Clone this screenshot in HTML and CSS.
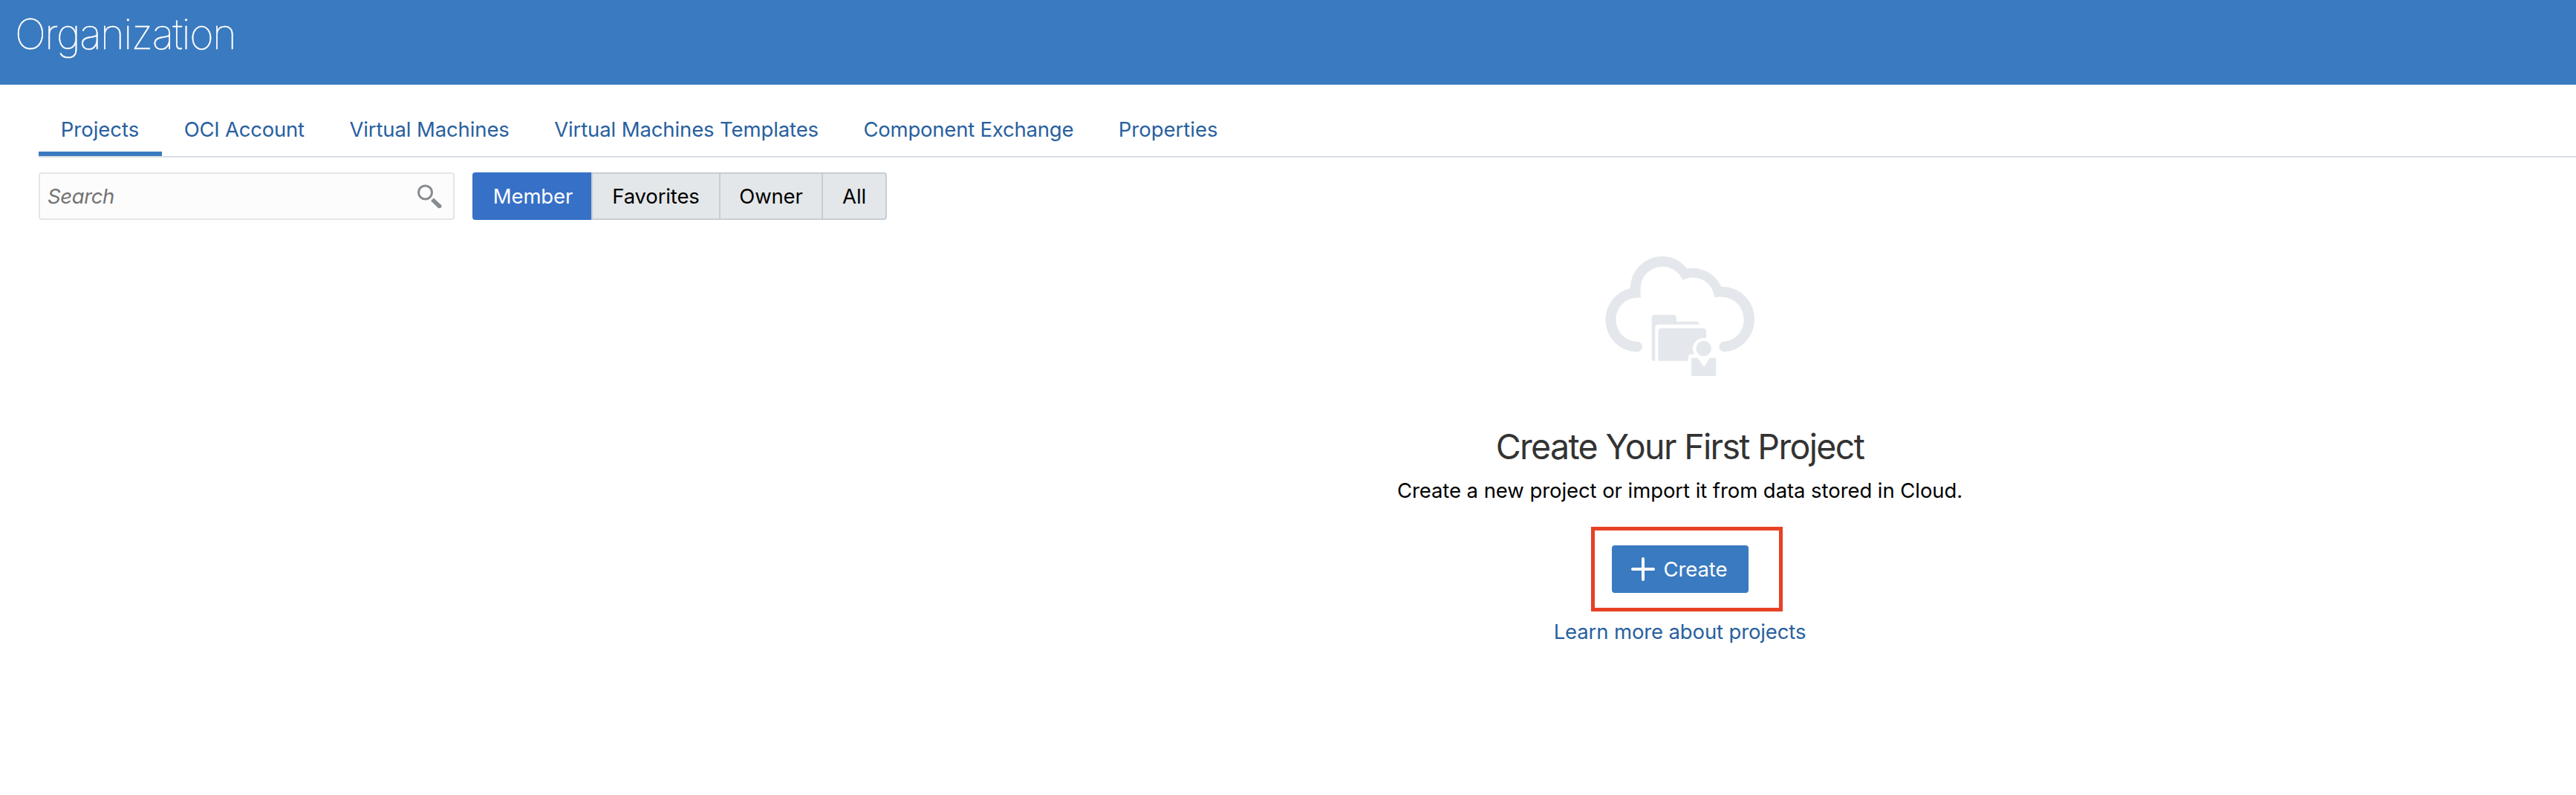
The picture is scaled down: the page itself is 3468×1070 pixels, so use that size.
FILE: index.html
```
<!DOCTYPE html>
<html lang="en">
<head>
<meta charset="utf-8">
<title>Organization</title>
<link rel="stylesheet" href="styles.css">
</head>
<body>
<header class="header"><h1 class="header-title">Organization</h1></header>
<nav class="tabs">
  <a class="tab tab-active tab-wide">Projects</a>
  <a class="tab tab-tight">OCI Account</a>
  <a class="tab">Virtual Machines</a>
  <a class="tab">Virtual Machines Templates</a>
  <a class="tab tab-tight">Component Exchange</a>
  <a class="tab tab-wide">Properties</a>
</nav>
<div class="toolbar">
  <div class="search">
    <span class="search-placeholder">Search</span>
    <svg class="search-icon" width="36" height="36" viewBox="0 0 36 36" fill="none" stroke="#878c90">
      <circle cx="12.5" cy="13" r="9" stroke-width="3"/>
      <path d="M22 22.5 32 32" stroke-width="5.5"/>
      <path d="M31.5 31.5h.2" stroke-width="5.5" stroke-linecap="round"/>
    </svg>
  </div>
  <div class="filters">
    <button class="filter filter-member">Member</button>
    <button class="filter filter-favorites">Favorites</button>
    <button class="filter filter-owner">Owner</button>
    <button class="filter filter-all">All</button>
  </div>
</div>
<main class="empty">
  <svg class="empty-art" width="260" height="210" viewBox="0 0 780 630" fill="#e4e8ec">
    <path d="M222 461A128 130 0 0 1 94 331A129 131 0 0 1 194 204A129 130 0 0 1 323 75A129 129 0 0 1 423 124A129 129 0 0 1 562 197A131 132 0 0 1 696 329A128 132 0 0 1 574 461A21 21 0 0 1 574 419A85 89 0 0 0 653 330A90 91 0 0 0 565 239Q550 238 534 241A87 87 0 0 0 406 171A89 89 0 0 0 323 117A87 88 0 0 0 236 205Q234 225 238 241L222 242A87 89 0 0 0 136 331A87 89 0 0 0 222 419A21 21 0 0 1 222 461Z"/>
    <path d="M281 491V323Q281 311 293 311H367Q381 311 381 325V338H460Q472 338 474 350H309Q295 350 295 364V497H287Q281 497 281 491Z"/>
    <path d="M307 497V378Q307 365 320 365H488Q501 365 501 378V405H490A43 43 0 0 0 453 470H440Q428 472 428 485V497Z"/>
    <circle cx="491" cy="447" r="31"/>
    <path d="M445 485H467L492 521L515 485H537Q541 485 541 489V554Q541 558 537 558H445Q441 558 441 554V489Q441 485 445 485Z"/>
  </svg>
  <h2 class="empty-title">Create Your First Project</h2>
  <p class="empty-text">Create a new project or import it from data stored in Cloud.</p>
  <div class="create-wrap">
    <button class="create">
      <svg width="32" height="32" viewBox="0 0 32 32" stroke="#fff" stroke-width="4" stroke-linecap="round"><path d="M16 2v28M2 16h28"/></svg>
      <span>Create</span>
    </button>
    <span class="highlight"></span>
  </div>
  <a class="learn">Learn more about projects</a>
</main>
</body>
</html>
```
FILE: styles.css
```
* { box-sizing: border-box; }
body { margin: 0; background: #fff; color: #000; font: 420 27.5px/40px Inter, "Liberation Sans", sans-serif; height: 1070px; overflow: hidden; }
h1, h2, p { margin: 0; }
button { font: inherit; border: 0; margin: 0; }
.header { height: 114px; background: #3a7ac0; padding: 10px 20px; }
.header-title { color: #fff; font-size: 56px; line-height: 72px; font-weight: 100; letter-spacing: -1.5px; -webkit-text-stroke: 0.6px #fff; }
.tabs { display: flex; margin-left: 52px; height: 98px; padding-top: 32px; border-bottom: 2px solid #d9dfe4; }
.tab { height: 64px; padding: 8px 30.8px 0 29.7px; color: #28609f; letter-spacing: -0.12px; white-space: nowrap; }
.tab-wide { letter-spacing: 0; }
.tab-tight { letter-spacing: -0.22px; }
.tab-active { width: 166px; border-bottom: 6px solid #3a7ac0; }
.toolbar { display: flex; gap: 24px; margin: 20px 0 0 52px; height: 64px; }
.search { display: flex; align-items: center; justify-content: space-between; width: 560px; padding: 0 14px 0 10px; border: 2px solid #e5e6e7; border-radius: 4px; background: #fcfcfc; }
.search-placeholder { color: #737373; font-style: italic; letter-spacing: -0.4px; }
.filters { display: flex; }
.filter { padding: 0; height: 64px; text-align: center; background: #e4e7e9; color: #000; border: 2px solid #c6cdd4; border-left-width: 0; letter-spacing: -0.15px; }
.filter-member { width: 160px; padding-left: 3px; background: #3770c7; color: #fff; border: 0; border-radius: 4px 0 0 4px; }
.filter-favorites { width: 174px; border-left-width: 2px; }
.filter-owner { width: 138px; }
.filter-all { width: 86px; border-radius: 0 4px 4px 0; }
.empty { display: flex; flex-direction: column; align-items: center; margin-left: 1055px; padding-top: 24px; }
.empty-art { margin-right: 3px; }
.empty-title { margin-top: 41px; font-size: 46.5px; line-height: 60px; font-weight: 420; letter-spacing: -1.65px; color: #333; }
.empty-text { margin-top: 9px; letter-spacing: -0.07px; }
.create-wrap { position: relative; margin-top: 54px; height: 64px; }
.create { display: flex; align-items: center; gap: 12px; width: 184px; height: 64px; padding: 0 0 0 26px; background: #3a7ac0; color: #fff; border-radius: 4px; letter-spacing: -0.1px; }
.highlight { position: absolute; left: -28px; top: -25px; width: 258px; height: 114px; border: 5px solid #e84126; }
.learn { margin-top: 32px; color: #28609f; letter-spacing: -0.13px; }
```
